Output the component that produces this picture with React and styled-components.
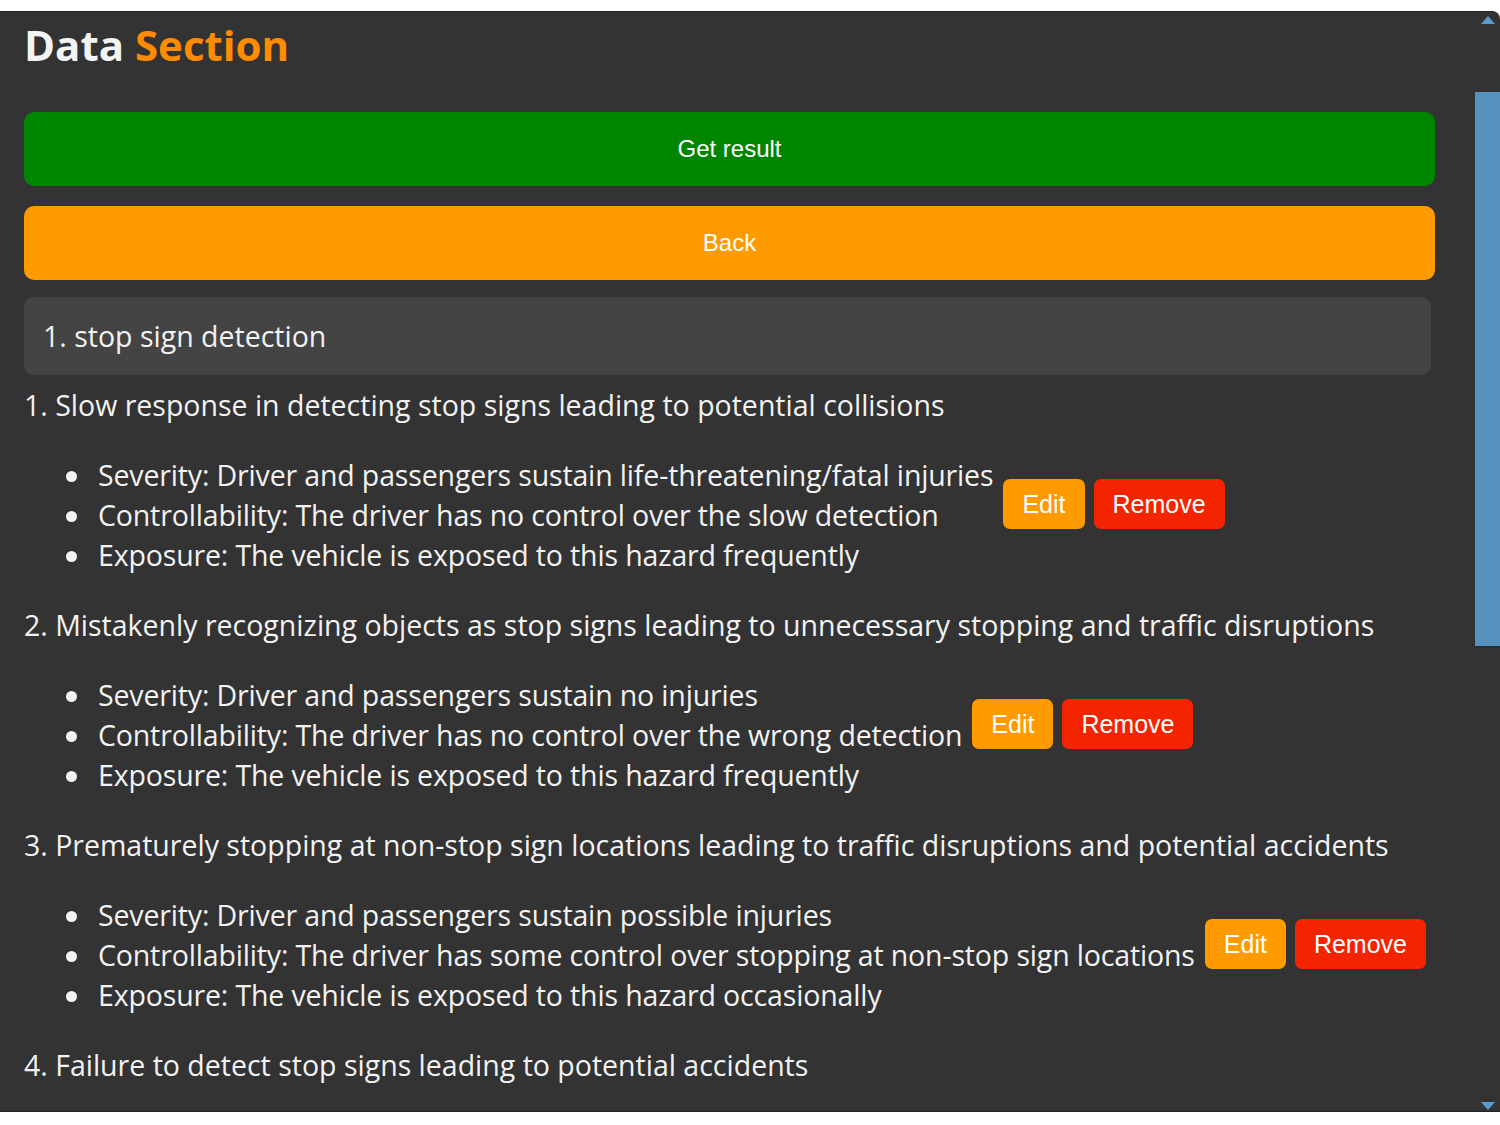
import React from "react";
import styled, { createGlobalStyle } from "styled-components";

const GlobalStyle = createGlobalStyle`
  html, body {
    margin: 0;
    padding: 0;
    background: #ffffff;
  }
  body {
    font-family: "Open Sans", "Noto Sans", sans-serif;
  }
`;

const Page = styled.div`
  padding-top: 11px;
  height: 1125px;
  box-sizing: border-box;
`;

const Panel = styled.div`
  display: flex;
  height: 1101px;
  background: #333333;
  border-top: 1px solid #222;
  border-bottom: 1px solid #222;
  border-top-right-radius: 8px;
  box-sizing: border-box;
  overflow: hidden;
`;

const Content = styled.div`
  flex: 1;
  min-width: 0;
  padding: 0 40px 0 24px;
  color: #f2f2f2;
`;

const Title = styled.h1`
  margin: 0;
  font-size: 42px;
  font-weight: 700;
  line-height: 66px;
  color: #f4f4f4;

  span {
    color: #ff8c00;
  }
`;

const WideButton = styled.button`
  display: block;
  width: 100%;
  height: 74px;
  border: none;
  border-radius: 10px;
  background: ${(p) => p.$bg};
  color: #ffffff;
  font-family: "Liberation Sans", Arial, sans-serif;
  font-size: 24px;
  margin-top: ${(p) => p.$top}px;
  cursor: pointer;
`;

const Project = styled.div`
  margin: 17px 4px 0 0;
  height: 78px;
  display: flex;
  align-items: center;
  padding-left: 19px;
  background: #444444;
  border-radius: 10px;
  font-size: 28.5px;
`;

const HazardList = styled.div`
  margin-top: 10px;
`;

const Hazard = styled.div`
  margin-bottom: 30px;
`;

const HazardTitle = styled.div`
  font-size: 28.5px;
  line-height: 40px;
  margin-bottom: 30px;
  white-space: nowrap;
`;

const HazardRow = styled.div`
  display: flex;
  align-items: center;
`;

const Ratings = styled.ul`
  margin: 0;
  padding-left: 74px;
  list-style: none;
  font-size: 28.5px;
  line-height: 40px;
  letter-spacing: -0.15px;
  white-space: nowrap;
`;

const Rating = styled.li`
  &::before {
    content: "";
    display: inline-block;
    width: 11px;
    height: 11px;
    border-radius: 50%;
    background: #f2f2f2;
    margin: 0 21px 0 -32px;
    vertical-align: 4px;
  }
`;

const Actions = styled.div`
  display: flex;
  flex-shrink: 0;
  gap: 9px;
  margin: 0 0 22px 10px;
`;

const SmallButton = styled.button`
  height: 50px;
  padding: 0 19px;
  border: none;
  border-radius: 7px;
  background: ${(p) => p.$bg};
  color: #ffffff;
  font-family: "Liberation Sans", Arial, sans-serif;
  font-size: 25px;
  cursor: pointer;
`;

const ScrollTrack = styled.div`
  width: 25px;
  flex-shrink: 0;
  display: flex;
  flex-direction: column;
  align-items: center;
  padding-bottom: 1px;
`;

const Arrow = styled.div`
  width: 0;
  height: 0;
  border-left: 7px solid transparent;
  border-right: 7px solid transparent;
  ${(p) =>
    p.$down
      ? "border-top: 8px solid #5a9bd0; margin-top: auto;"
      : "border-bottom: 8px solid #5a9bd0; margin-top: 4px;"}
`;

const Thumb = styled.div`
  width: 25px;
  height: 554px;
  margin-top: 68px;
  background: #5592bd;
  border-bottom: 2px solid #2b2b2b;
`;

const hazards = [
  {
    title: "Slow response in detecting stop signs leading to potential collisions",
    ratings: [
      "Severity: Driver and passengers sustain life-threatening/fatal injuries",
      "Controllability: The driver has no control over the slow detection",
      "Exposure: The vehicle is exposed to this hazard frequently",
    ],
  },
  {
    title:
      "Mistakenly recognizing objects as stop signs leading to unnecessary stopping and traffic disruptions",
    ratings: [
      "Severity: Driver and passengers sustain no injuries",
      "Controllability: The driver has no control over the wrong detection",
      "Exposure: The vehicle is exposed to this hazard frequently",
    ],
  },
  {
    title:
      "Prematurely stopping at non-stop sign locations leading to traffic disruptions and potential accidents",
    ratings: [
      "Severity: Driver and passengers sustain possible injuries",
      "Controllability: The driver has some control over stopping at non-stop sign locations",
      "Exposure: The vehicle is exposed to this hazard occasionally",
    ],
  },
  {
    title: "Failure to detect stop signs leading to potential accidents",
    ratings: [],
  },
];

export default function App() {
  return (
    <Page>
      <GlobalStyle />
      <Panel>
        <Content>
          <Title>
            Data <span>Section</span>
          </Title>
          <WideButton $bg="#008500" $top={34}>
            Get result
          </WideButton>
          <WideButton $bg="#ff9a00" $top={20}>
            Back
          </WideButton>
          <Project>1. stop sign detection</Project>
          <HazardList>
            {hazards.map((h, i) => (
              <Hazard key={i}>
                <HazardTitle>
                  {i + 1}. {h.title}
                </HazardTitle>
                {h.ratings.length > 0 && (
                  <HazardRow>
                    <Ratings>
                      {h.ratings.map((r) => (
                        <Rating key={r}>{r}</Rating>
                      ))}
                    </Ratings>
                    <Actions>
                      <SmallButton $bg="#ff9a00">Edit</SmallButton>
                      <SmallButton $bg="#f42400">Remove</SmallButton>
                    </Actions>
                  </HazardRow>
                )}
              </Hazard>
            ))}
          </HazardList>
        </Content>
        <ScrollTrack>
          <Arrow />
          <Thumb />
          <Arrow $down />
        </ScrollTrack>
      </Panel>
    </Page>
  );
}
